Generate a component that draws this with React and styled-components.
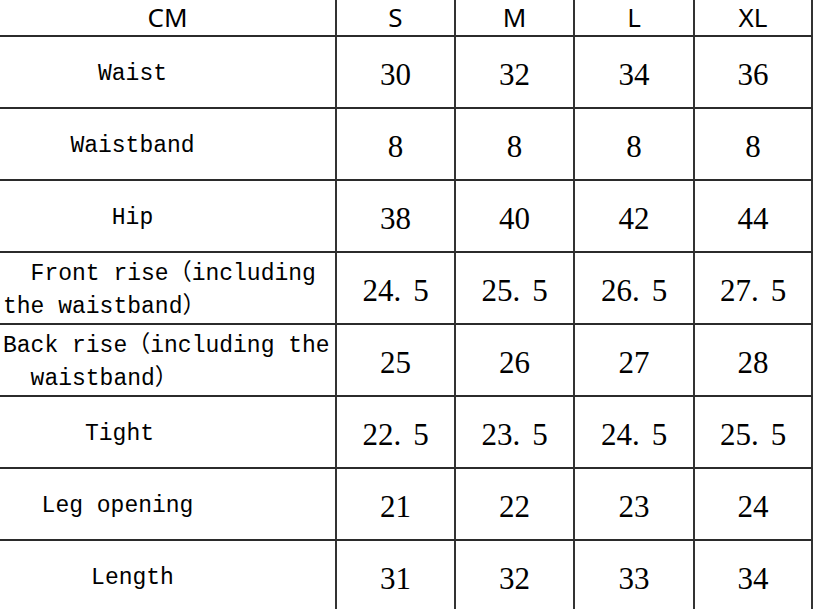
import React from 'react';
import styled, { createGlobalStyle } from 'styled-components';

const GlobalStyle = createGlobalStyle`
  html, body {
    margin: 0;
    padding: 0;
    background: #fff;
    overflow: hidden;
  }
`;

const Table = styled.div`
  display: grid;
  grid-template-columns: 337px 119px 119px 120px 118px;
  grid-template-rows: 37px;
  grid-auto-rows: 72px;
  width: 813px;
`;

const Cell = styled.div`
  display: flex;
  align-items: center;
  justify-content: ${(p) => (p.$left ? 'flex-start' : 'center')};
  border-right: 2px solid #333;
  border-bottom: 2px solid #2b2b2b;
  box-sizing: border-box;
  color: #111;
`;

const HeadCell = styled(Cell)`
  font-family: "Noto Sans", "Liberation Sans", sans-serif;
  font-size: 26px;
  color: #000;
  padding-bottom: 2px;
`;

const LabelCell = styled(Cell)`
  font-family: "Liberation Mono", "Noto Sans CJK SC", monospace;
  font-size: 23px;
  line-height: 33px;
  white-space: pre;
  padding-top: 5px;
  padding-left: ${(p) => (p.$left ? '3px' : '0')};
  padding-right: ${(p) => (p.$left ? '0' : `${p.$shift}px`)};
  color: #000;
`;

const NumCell = styled(Cell)`
  font-family: "Liberation Serif", serif;
  font-size: 31px;
  padding-top: 6px;
  color: #000;
`;

const Dot = styled.span`
  margin-right: 12px;
`;

const sizes = ['S', 'M', 'L', 'XL'];

const rows = [
  { label: 'Waist', shift: 70, values: ['30', '32', '34', '36'] },
  { label: 'Waistband', shift: 70, values: ['8', '8', '8', '8'] },
  { label: 'Hip', shift: 70, values: ['38', '40', '42', '44'] },
  {
    label: '  Front rise（including\nthe waistband）',
    left: true,
    values: ['24.5', '25.5', '26.5', '27.5']
  },
  {
    label: 'Back rise（including the\n  waistband）',
    left: true,
    values: ['25', '26', '27', '28']
  },
  { label: 'Tight', shift: 96, values: ['22.5', '23.5', '24.5', '25.5'] },
  { label: 'Leg opening', shift: 100, values: ['21', '22', '23', '24'] },
  { label: 'Length', shift: 70, values: ['31', '32', '33', '34'] }
];

const Num = ({ value }) => {
  const [whole, dec] = value.split('.');
  if (!dec) return value;
  return (
    <>
      {whole}
      <Dot>.</Dot>
      {dec}
    </>
  );
};

const App = () => (
  <>
    <GlobalStyle />
    <Table>
      <HeadCell>CM</HeadCell>
      {sizes.map((s) => (
        <HeadCell key={s}>{s}</HeadCell>
      ))}
      {rows.map((r) => (
        <React.Fragment key={r.label}>
          <LabelCell $left={r.left} $shift={r.shift}>{r.label}</LabelCell>
          {r.values.map((v, i) => (
            <NumCell key={sizes[i]}>
              <Num value={v} />
            </NumCell>
          ))}
        </React.Fragment>
      ))}
    </Table>
  </>
);

export default App;
